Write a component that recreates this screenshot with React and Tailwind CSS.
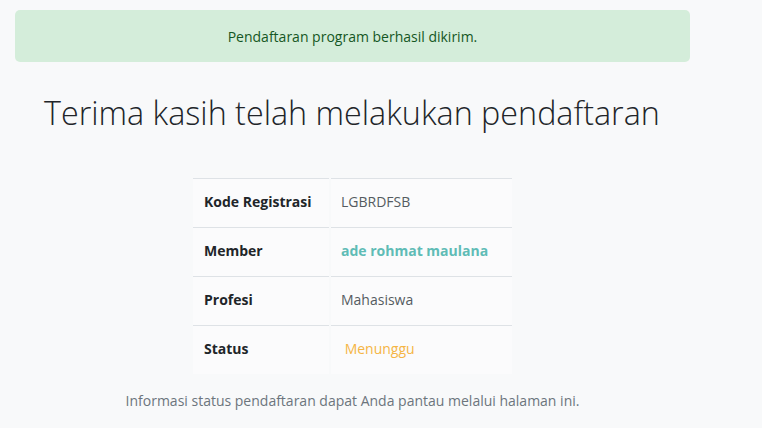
export default function App() {
  const rows = [
    { label: "Kode Registrasi", value: "LGBRDFSB", cls: "text-[#555b61]" },
    { label: "Member", value: "ade rohmat maulana", cls: "font-bold text-[#5fbcb6]" },
    { label: "Profesi", value: "Mahasiswa", cls: "text-[#555b61]" },
    { label: "Status", value: "\u00a0Menunggu", cls: "text-[#f5b544]" },
  ];

  return (
    <div className="min-h-screen bg-[#f8f9fa] font-['Open_Sans',sans-serif] text-[#212529]">
      <div className="w-[675px] ml-[15px] pt-[10px]">
        <div className="h-[52px] rounded-[5px] bg-[#d4edda] flex items-center justify-center text-[14px] text-[#155724]">
          Pendaftaran program berhasil dikirim.
        </div>

        <h1 className="mt-[26px] pl-[29px] whitespace-nowrap text-[32.3px] font-light leading-[48px] text-[#212529]">
          Terima kasih telah melakukan pendaftaran
        </h1>

        <div className="mt-[42px] flex justify-center">
          <table className="border-separate border-spacing-x-[2px] border-spacing-y-0 text-[14px]">
            <tbody>
              {rows.map((r) => (
                <tr key={r.label}>
                  <td className="w-[136px] h-[49px] border-t border-[#dee2e6] bg-[#fbfbfc] pl-[11px] pb-[4px] font-bold">
                    {r.label}
                  </td>
                  <td className={`w-[181px] h-[49px] border-t border-[#dee2e6] bg-[#fbfbfc] pl-[10px] pb-[4px] ${r.cls}`}>
                    {r.value}
                  </td>
                </tr>
              ))}
            </tbody>
          </table>
        </div>

        <p className="mt-[16px] text-center text-[14px] text-[#6c757d]">
          Informasi status pendaftaran dapat Anda pantau melalui halaman ini.
        </p>
      </div>
    </div>
  );
}
